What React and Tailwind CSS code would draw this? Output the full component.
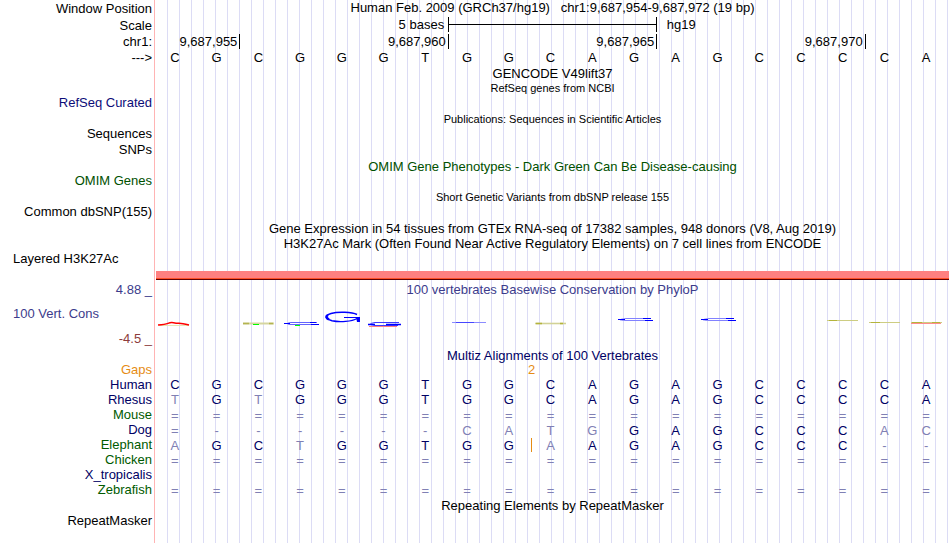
const TICKS = ["9,687,955", "9,687,960", "9,687,965", "9,687,970"];

const REFERENCE = "CGCGGGTGGCAGAGCCCCA";

// Lower case letters are bases that differ from the reference
const ALIGNMENTS = [
  { name: "Human", color: "text-[#000064]", bases: "CGCGGGTGGCAGAGCCCCA" },
  { name: "Rhesus", color: "text-[#000064]", bases: "tGtGGGTGGCAGAGCCCCA" },
  { name: "Mouse", color: "text-[#005a00]", bases: "===================" },
  { name: "Dog", color: "text-[#000064]", bases: "=------catgGAGCCCac" },
  { name: "Elephant", color: "text-[#005a00]", bases: "aGCtGGTGGaAGAGCCC--", insertAt: 9 },
  { name: "Chicken", color: "text-[#005a00]", bases: "===================" },
  { name: "X_tropicalis", color: "text-[#000064]", bases: "" },
  { name: "Zebrafish", color: "text-[#005a00]", bases: "===================" },
];

const GRID = "grid grid-cols-[repeat(19,minmax(0,1fr))]";

function Row({ label, labelColor = "", height = "h-4", children }) {
  return (
    <div className={`flex items-center ${height}`}>
      <div
        className={`w-[152px] mr-1 shrink-0 text-right whitespace-nowrap ${
          children ? "" : "pb-0.5"
        } ${labelColor}`}
      >
        {label}
      </div>
      <div className="flex-1 min-w-0 h-full">{children}</div>
    </div>
  );
}

function Title({ small, color = "", height = "h-4", children }) {
  return (
    <Row height={height}>
      <h2
        className={`h-full flex items-center justify-center whitespace-pre ${
          small ? "text-[11px]" : ""
        } ${color}`}
      >
        {children}
      </h2>
    </Row>
  );
}

function Bases({ bases, insertAt, muted = "text-[#8080b4]", strong = "text-[#000064]" }) {
  return (
    <div className={`${GRID} h-full items-center text-center -ml-0.5 mr-0.5`}>
      {bases.split("").map((base, i) => {
        const match = base >= "A" && base <= "Z";
        return (
          <span key={i} className={`relative ${match || /[a-z]/.test(base) ? "" : "pt-px"} ${match ? strong : muted}`}>
            {i === insertAt && (
              <span className="absolute left-px top-0 bottom-px border-l border-[#e68c14]" />
            )}
            {base.toUpperCase()}
          </span>
        );
      })}
    </div>
  );
}

function ConservationLogo() {
  return (
    <svg
      viewBox="156 298 793 50"
      preserveAspectRatio="none"
      className="block w-full h-full"
      fill="none"
      role="img"
      aria-label="Basewise conservation"
    >
      <path d="M159 325.5h30" stroke="#e6e6b4" />
      <path d="M158 325Q165 324.5 168 323.3T173.5 322.7T179 323.3T189 325" stroke="#ff0000" strokeWidth="1.4" />

      <path d="M243 323.5h31" stroke="#d6d6a0" strokeWidth="2" />
      <path d="M243 323.5h6M269 323.5h4" stroke="#b4b450" strokeWidth="1.4" />
      <path d="M253 324.5h6" stroke="#00ff00" />

      <path d="M317 322.5H291Q284 323.5 290 324.5H319" stroke="#6464ff" />
      <path d="M284 323.5h6M311 324.5h8M310 322.5h6" stroke="#0000ff" />
      <path d="M295 325.5h5" stroke="#00ff00" />

      <path d="M357 314.5C352 312 338 311.5 331 313.5C324 315.5 325 319 332 320.8C340 322.5 352 321.5 357 318.5" stroke="#0000ff" strokeWidth="1.4" />
      <path d="M328 315Q324.5 317 329 319.5" stroke="#0000ff" strokeWidth="2.5" />
      <path d="M344 317.5h14" stroke="#0000ff" />
      <path d="M356 317h4v5h-3z" fill="#0000ff" />

      <path d="M399 322.5H375Q366 324 375 325.5H398" stroke="#3c3cff" />
      <path d="M368 324.5h7M386 324.5h15" stroke="#0000ff" strokeWidth="1.4" />
      <path d="M369 326.5h28" stroke="#ff8080" />

      <path d="M452 322.5h34" stroke="#8c8cff" />
      <path d="M456 322.5h18" stroke="#4646ff" />

      <path d="M535 323.5h31" stroke="#d2d296" strokeWidth="1.6" />
      <path d="M536 323.5h6M560 323.5h3" stroke="#b4b43c" strokeWidth="1.6" />

      <path d="M650 318.5H626Q614 320 626 320.5H653" stroke="#8282ff" />
      <path d="M618 319.5h7M643 318.5h8M645 320.5h8" stroke="#0000ff" />

      <path d="M733 318.5H709Q697 320 709 320.5H736" stroke="#8282ff" />
      <path d="M701 319.5h7M726 318.5h8M728 320.5h8" stroke="#0000ff" />

      <path d="M827 320.5h31M869 322.5h31M911 322.5h31" stroke="#cdcd82" />
      <path d="M829 320.5h8M871 322.5h9M912 322.5h10M932 322.5h8" stroke="#b4b43c" />
      <path d="M911 323.5h30" stroke="#ff8c8c" />
    </svg>
  );
}

export default function App() {
  return (
    <main className="relative min-h-screen bg-white text-black text-[13px] leading-[15px] font-['Liberation_Sans',Arial,sans-serif]">
      {/* Guide lines */}
      <div className="absolute inset-y-0 left-[154px] right-px border-l border-[#ffb4b4] pl-px bg-origin-content bg-clip-content bg-[linear-gradient(to_right,transparent_11px,#dcdcf5_11px)] bg-size-[12px_100%]" />

      <div className="relative pr-px">
        <Row label="Window Position" height="h-[17px]">
          <h1 className="text-center whitespace-pre">
            {"Human Feb. 2009 (GRCh37/hg19)   chr1:9,687,954-9,687,972 (19 bp)"}
          </h1>
        </Row>
        <Row label="Scale">
          <div className={`${GRID} h-full`}>
            <span className="col-span-7 text-right pr-1">5 bases</span>
            <span className="col-span-5 h-[15px] border-x border-black flex items-center">
              <span className="w-full border-t border-black" />
            </span>
            <span className="col-span-7 pl-[10px]">hg19</span>
          </div>
        </Row>
        <Row label="chr1:">
          <div className={`${GRID} h-full items-center mr-px`}>
            {TICKS.map((tick, i) => (
              <span
                key={tick}
                className={`${i === 0 ? "col-span-2" : "col-span-5"} -mr-px pr-0.5 border-r border-black text-right`}
              >
                {tick}
              </span>
            ))}
          </div>
        </Row>
        <Row label="--->">
          <Bases bases={REFERENCE} strong="text-black" />
        </Row>

        {/* Gene and variant tracks */}
        <Title>GENCODE V49lift37</Title>
        <Title small height="h-[15px]">RefSeq genes from NCBI</Title>
        <Row label="RefSeq Curated" labelColor="text-[#0c0c78]" height="h-[15px]" />
        <Title small>Publications: Sequences in Scientific Articles</Title>
        <Row label="Sequences" height="h-[15px]" />
        <Row label="SNPs" />
        <Title color="text-[#005000]">OMIM Gene Phenotypes - Dark Green Can Be Disease-causing</Title>
        <Row label="OMIM Genes" labelColor="text-[#005000]" height="h-[15px]" />
        <Title small>Short Genetic Variants from dbSNP release 155</Title>
        <Row label="Common dbSNP(155)" height="h-[15px]" />
        <Title>Gene Expression in 54 tissues from GTEx RNA-seq of 17382 samples, 948 donors (V8, Aug 2019)</Title>
        <Title height="h-[15px]">
          H3K27Ac Mark (Often Found Near Active Regulatory Elements) on 7 cell lines from ENCODE
        </Title>
        <div className="h-[15px] pl-[13px]">Layered H3K27Ac</div>
        <div className="ml-[156px] mt-[5px] mb-0.5 h-[9px] bg-[#ff8080] border-b border-[#640000] shadow-[inset_0_-1px_0_#ff5028]" />

        {/* Conservation */}
        <Row label="4.88 _" labelColor="text-[#3c3c8c] pb-0.5">
          <h2 className="text-center text-[#3c3c8c]">100 vertebrates Basewise Conservation by PhyloP</h2>
        </Row>
        <div className="flex h-[50px]">
          <div className="w-[152px] mr-1 shrink-0 pt-2 pb-0.5 flex flex-col justify-between">
            <span className="pl-[13px] text-[#3c3c8c]">100 Vert. Cons</span>
            <span className="text-right text-[#8c3c3c]">-4.5 _</span>
          </div>
          <div className="flex-1 min-w-0">
            <ConservationLogo />
          </div>
        </div>

        {/* Alignments */}
        <Title height="h-[14px]" color="text-[#000064]">Multiz Alignments of 100 Vertebrates</Title>
        <Row label="Gaps" labelColor="text-[#e68c14]" height="h-[15px]">
          <div className={`${GRID} text-[#e68c14]`}>
            <span className="col-start-9 col-span-2 text-center">2</span>
          </div>
        </Row>
        {ALIGNMENTS.map(({ name, color, bases, insertAt }) => (
          <Row key={name} label={name} labelColor={color} height="h-[15px]">
            <Bases bases={bases} insertAt={insertAt} />
          </Row>
        ))}
        <Title height="h-[17px]">Repeating Elements by RepeatMasker</Title>
        <Row label="RepeatMasker" height="h-[15px]" />
      </div>
    </main>
  );
}
